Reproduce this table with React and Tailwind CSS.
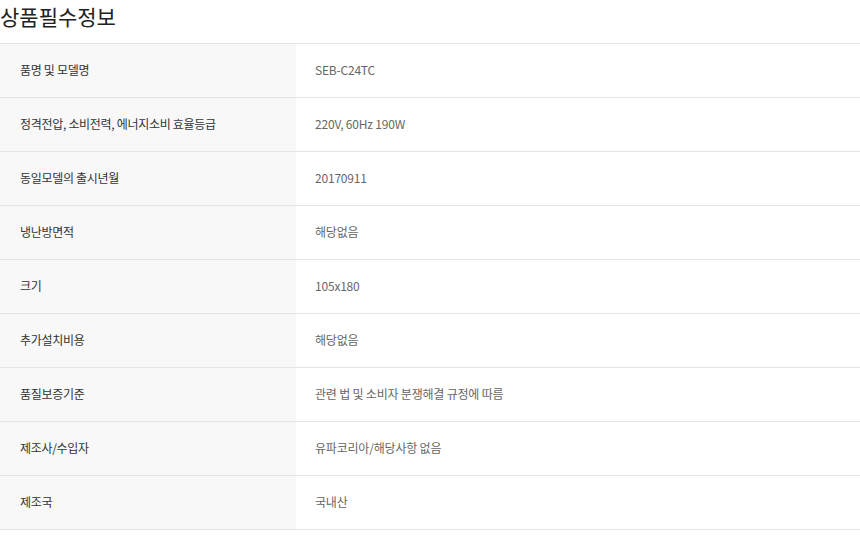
import React from "react";

const rows = [
  ["품명 및 모델명", "SEB-C24TC"],
  ["정격전압, 소비전력, 에너지소비 효율등급", "220V, 60Hz 190W"],
  ["동일모델의 출시년월", "20170911"],
  ["냉난방면적", "해당없음"],
  ["크기", "105x180"],
  ["추가설치비용", "해당없음"],
  ["품질보증기준", "관련 법 및 소비자 분쟁해결 규정에 따름"],
  ["제조사/수입자", "유파코리아/해당사항 없음"],
  ["제조국", "국내산"],
];

export default function App() {
  return (
    <div
      className="w-[860px] h-[535px] bg-white overflow-hidden"
      style={{ fontFamily: '"Noto Sans CJK KR", "Noto Sans", sans-serif' }}
    >
      <h2 className="h-[43px] text-[21px] leading-[32px] text-[#222] font-normal">
        상품필수정보
      </h2>
      <div className="border-t border-[#e5e5e5]">
        {rows.map(([k, v]) => (
          <div key={k} className="flex h-[54px] border-b border-[#e5e5e5]">
            <div className="w-[296px] bg-[#f8f8f8] flex items-center pl-[20px] pb-[1px] text-[12px] text-[#333] tracking-[-0.3px]">
              {k}
            </div>
            <div className="flex-1 flex items-center pl-[19px] pb-[1px] text-[12px] text-[#666] tracking-[-0.2px]">
              {v}
            </div>
          </div>
        ))}
      </div>
    </div>
  );
}
